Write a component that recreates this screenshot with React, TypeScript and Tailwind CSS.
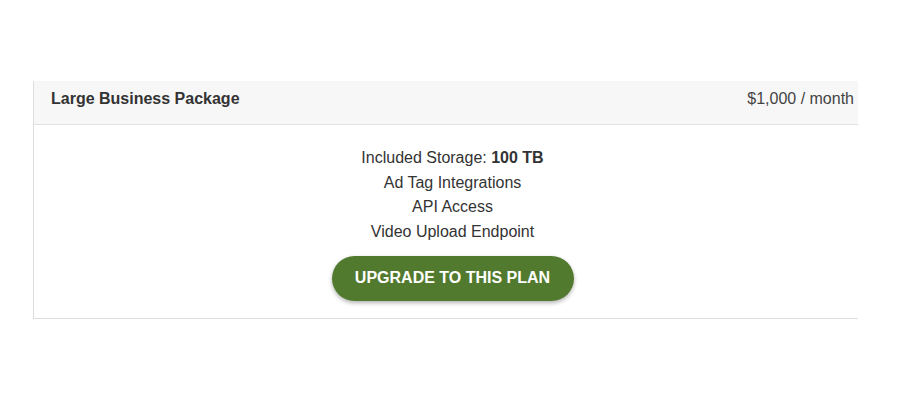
export default function App() {
  return (
    <div className="w-[905px] h-[400px] bg-white" style={{ fontFamily: '"Liberation Sans", Arial, sans-serif' }}>
      <div className="w-[858px] overflow-hidden pt-[81px]">
        <div className="ml-[33px] w-[839px] border border-t-0 border-[#dedede]">
          <div className="h-[44px] bg-[#f7f7f7] border-b border-[#e3e3e3] flex items-start justify-between px-[17px] pt-[9px] text-[16px] leading-[18px]">
            <span className="font-bold text-[#333]">Large Business Package</span>
            <span className="text-[#444]">$1,000 / month</span>
          </div>
          <div className="flex flex-col items-center pt-[21px] pb-[17px] text-[16px] leading-[24.5px] text-[#333]">
            <div>Included Storage: <span className="font-bold">100 TB</span></div>
            <div>Ad Tag Integrations</div>
            <div>API Access</div>
            <div>Video Upload Endpoint</div>
            <button className="mt-[12px] h-[45px] w-[242px] rounded-full bg-[#527a2e] text-white font-bold text-[16px] shadow-[0_2px_4px_rgba(0,0,0,0.3)]">
              UPGRADE TO THIS PLAN
            </button>
          </div>
        </div>
      </div>
    </div>
  );
}
